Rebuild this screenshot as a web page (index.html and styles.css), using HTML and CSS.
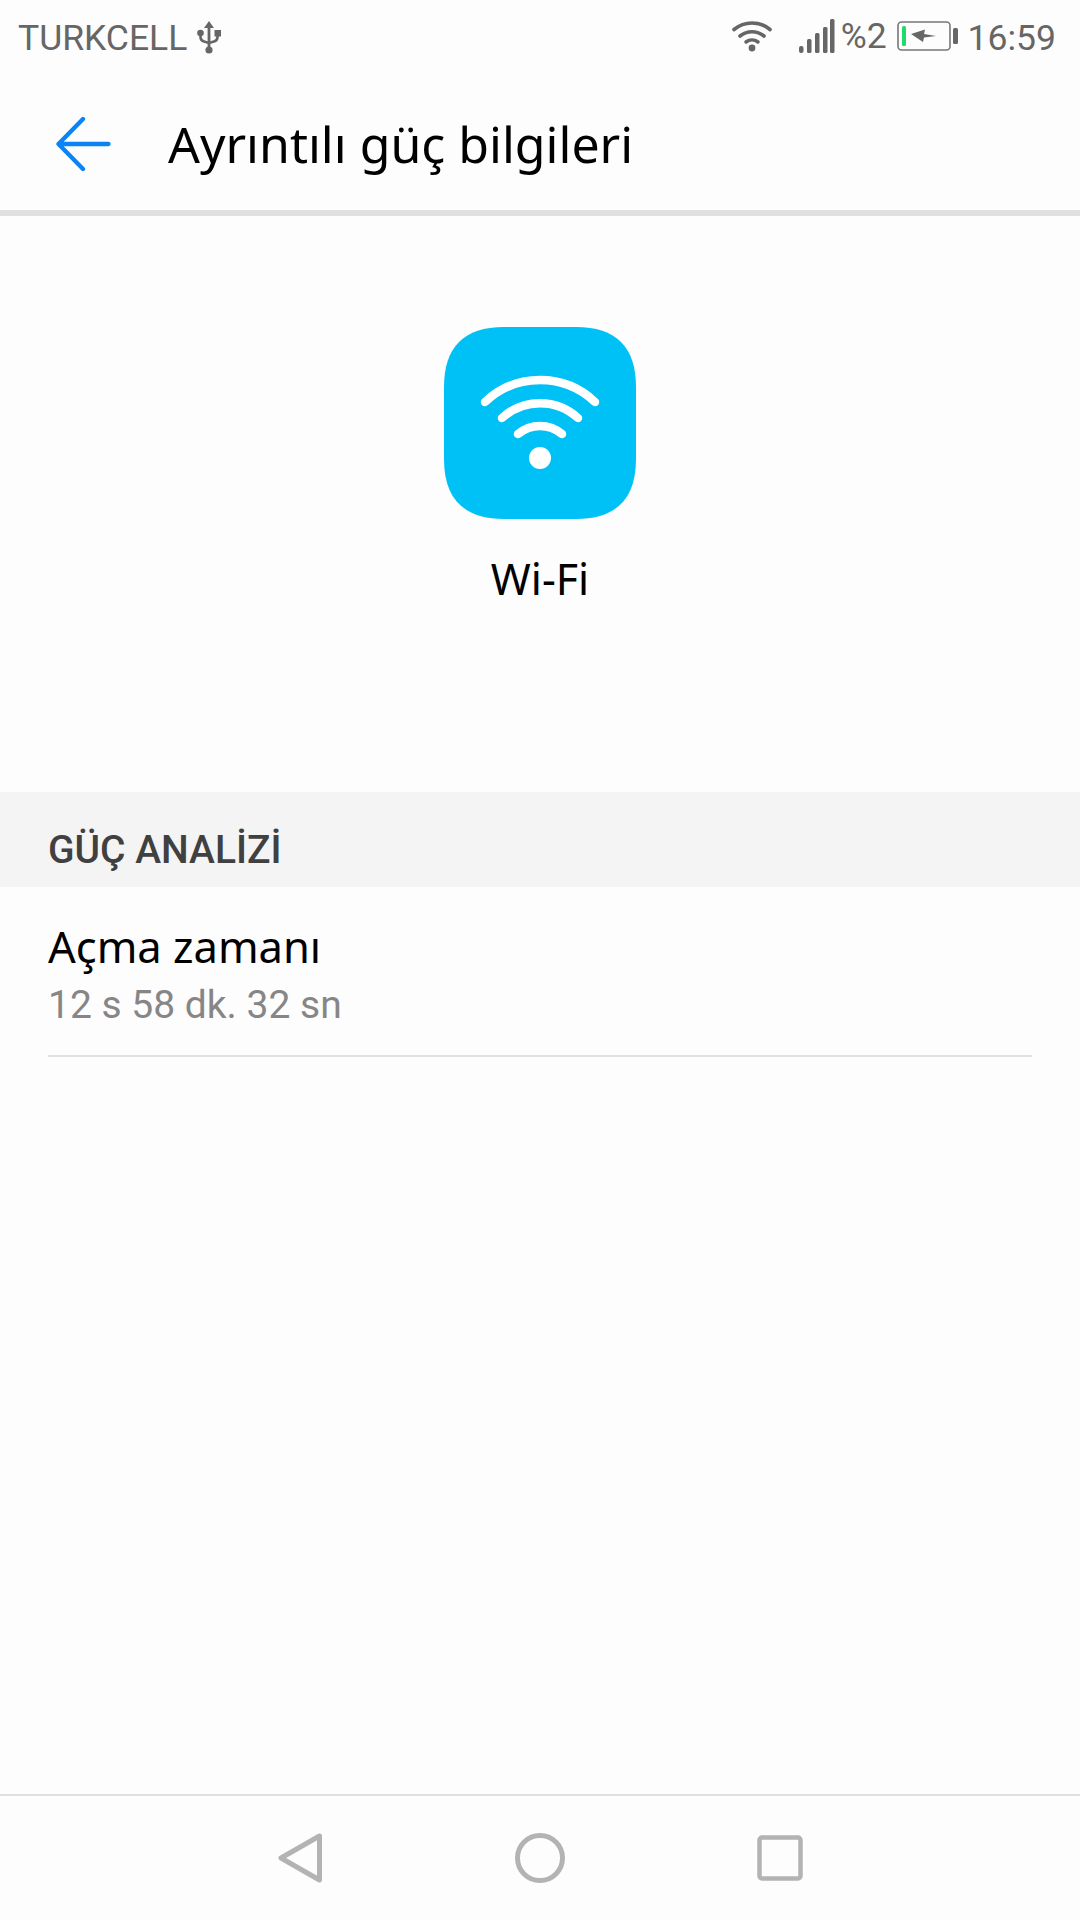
FILE: index.html
```html
<!DOCTYPE html>
<html lang="tr">
<head>
    <meta charset="UTF-8">
    <meta name="viewport" content="width=device-width, initial-scale=1.0">
    <title>Ayrıntılı güç bilgileri</title>
    <link rel="stylesheet" href="styles.css">
</head>
<body>
    <div class="screen">
        <div class="status-bar">
            <div class="status-left">
                <span>TURKCELL</span>
                <svg class="usb-icon" width="24" height="36" viewBox="0 0 24 36">
                    <path d="M12 1l5 7h-3.600v19.500h-2.800V8H7z" fill="#666"/>
                    <circle cx="12" cy="30" r="3.600" fill="#666"/>
                    <path d="M3.500 13v4q0 3.500 3.500 4.500l5 1.500 5-1.500q3.500-1 3.500-4.500v-4" fill="none" stroke="#666" stroke-width="2.600"/>
                    <circle cx="3.500" cy="13" r="3.300" fill="#666"/>
                    <rect x="17.500" y="10" width="6.500" height="6.500" fill="#666"/>
                </svg>
            </div>
            <div class="status-right">
                <svg class="wifi-small" width="40" height="32" viewBox="0 0 40 32">
                    <g fill="none" stroke="#666" stroke-width="3.600" stroke-linecap="round">
                        <path d="M2 9.500A28 28 0 0 1 38 9.500"/>
                        <path d="M8 16A19 19 0 0 1 32 16"/>
                        <path d="M14 22A10 10 0 0 1 26 22"/>
                    </g>
                    <circle cx="20" cy="28" r="3.400" fill="#666"/>
                </svg>
                <svg class="signal" width="36" height="34" viewBox="0 0 36 34">
                    <g fill="#666">
                        <rect x="0" y="27" width="4.500" height="7" rx="2"/>
                        <rect x="8" y="20" width="4.500" height="14" rx="1.500"/>
                        <rect x="16" y="14" width="4.500" height="20" rx="1.500"/>
                        <rect x="24" y="8" width="4.500" height="26" rx="1.500"/>
                        <rect x="31" y="0" width="4.500" height="34" rx="1.500"/>
                    </g>
                </svg>
                <span class="percent">%2</span>
                <svg class="battery" width="62" height="30" viewBox="0 0 62 30">
                    <rect x="1" y="1" width="52" height="28" rx="3.500" fill="none" stroke="#777" stroke-width="1.600"/>
                    <rect x="5" y="5" width="4" height="20" rx="1.500" fill="#1fdc6a"/>
                    <path d="M14 13L28 8.500L27 13L39 15L27 16.500L26 21z" fill="#666"/>
                    <rect x="56" y="7" width="5" height="16" rx="1.500" fill="#666"/>
                </svg>
                <span class="clock">16:59</span>
            </div>
        </div>

        <div class="toolbar">
            <svg class="back-arrow" width="56" height="56" viewBox="0 0 56 56">
                <path d="M28 3L3.500 28 28 53M3.500 28h50" fill="none" stroke="#0a84f5" stroke-width="4.300" stroke-linecap="round" stroke-linejoin="round"/>
            </svg>
            <h1 class="title">Ayrıntılı güç bilgileri</h1>
        </div>

        <div class="hero">
            <svg class="app-icon" width="192" height="192" viewBox="0 0 192 192">
                <path d="M60 0H132C172 0 192 20 192 60V132C192 172 172 192 132 192H60C20 192 0 172 0 132V60C0 20 20 0 60 0Z" fill="#00c1f5"/>
                <g fill="none" stroke="#fff" stroke-width="8.500" stroke-linecap="round">
                    <path d="M41 75A80 80 0 0 1 151 75"/>
                    <path d="M58 91A56 56 0 0 1 134 91"/>
                    <path d="M74 107A34 34 0 0 1 118 107"/>
                </g>
                <circle cx="96" cy="131" r="11" fill="#fff"/>
            </svg>
            <div class="app-name">Wi-Fi</div>
        </div>

        <div class="section-header">GÜÇ ANALİZİ</div>

        <div class="row">
            <div class="row-title">Açma zamanı</div>
            <div class="row-value">12 s 58 dk. 32 sn</div>
        </div>

        <div class="spacer"></div>

        <div class="nav-bar">
            <svg width="46" height="52" viewBox="0 0 46 52">
                <path d="M42.500 4L4 26l38.500 22z" fill="none" stroke="#b3b3b3" stroke-width="5" stroke-linejoin="round"/>
            </svg>
            <svg width="50" height="50" viewBox="0 0 50 50">
                <circle cx="25" cy="25" r="22.500" fill="none" stroke="#b3b3b3" stroke-width="5"/>
            </svg>
            <svg width="46" height="46" viewBox="0 0 46 46">
                <rect x="2.500" y="2.500" width="41" height="41" rx="2.500" fill="none" stroke="#b3b3b3" stroke-width="4.500"/>
            </svg>
        </div>
    </div>
</body>
</html>
```
FILE: styles.css
```css
* {
    box-sizing: border-box;
}
body {
    margin: 0;
    background-color: #fdfdfd;
    font-family: "Roboto", sans-serif;
}
.screen {
    width: 1080px;
    height: 1920px;
    display: flex;
    flex-direction: column;
    overflow: hidden;
}
.status-bar {
    height: 70px;
    padding: 5px 24px 0 18px;
    display: flex;
    justify-content: space-between;
    align-items: center;
    color: #666;
    font-size: 35.5px;
}
.status-left {
    display: flex;
    align-items: center;
    gap: 10px;
}
.status-right {
    display: flex;
    align-items: center;
}
.wifi-small {
    margin: -4px 27px 0 0;
}
.signal {
    margin-top: -4px;
}
.percent {
    margin: -4px 10px 0 6px;
}
.battery {
    margin-top: -4px;
}
.clock {
    margin-left: 9px;
}
.toolbar {
    height: 146px;
    padding: 8px 0 0 55px;
    display: flex;
    align-items: center;
    border-bottom: 6px solid #e0e0e0;
}
.title {
    margin: 0 0 0 57px;
    font-family: "Noto Sans", sans-serif;
    font-size: 50px;
    font-weight: 400;
    color: #000;
}
.hero {
    height: 576px;
    padding-top: 111px;
    display: flex;
    flex-direction: column;
    align-items: center;
}
.app-name {
    margin-top: 30px;
    font-family: "Noto Sans", sans-serif;
    font-size: 43px;
    color: #000;
}
.section-header {
    height: 95px;
    padding: 36px 48px 0;
    background-color: #f4f4f4;
    color: #404040;
    font-size: 39px;
    font-weight: 500;
    line-height: 44px;
}
.row {
    height: 170px;
    margin: 0 48px;
    padding-top: 30px;
    border-bottom: 2px solid #e0e0e0;
}
.row-title {
    font-family: "Noto Sans", sans-serif;
    font-size: 43.5px;
    line-height: 58px;
    color: #000;
}
.row-value {
    font-size: 39px;
    line-height: 60px;
    color: #868686;
}
.spacer {
    flex: 1;
}
.nav-bar {
    height: 126px;
    border-top: 2px solid #e0e0e0;
    display: grid;
    grid-template-columns: repeat(3, 240px);
    justify-content: center;
    justify-items: center;
    align-items: center;
}
```
